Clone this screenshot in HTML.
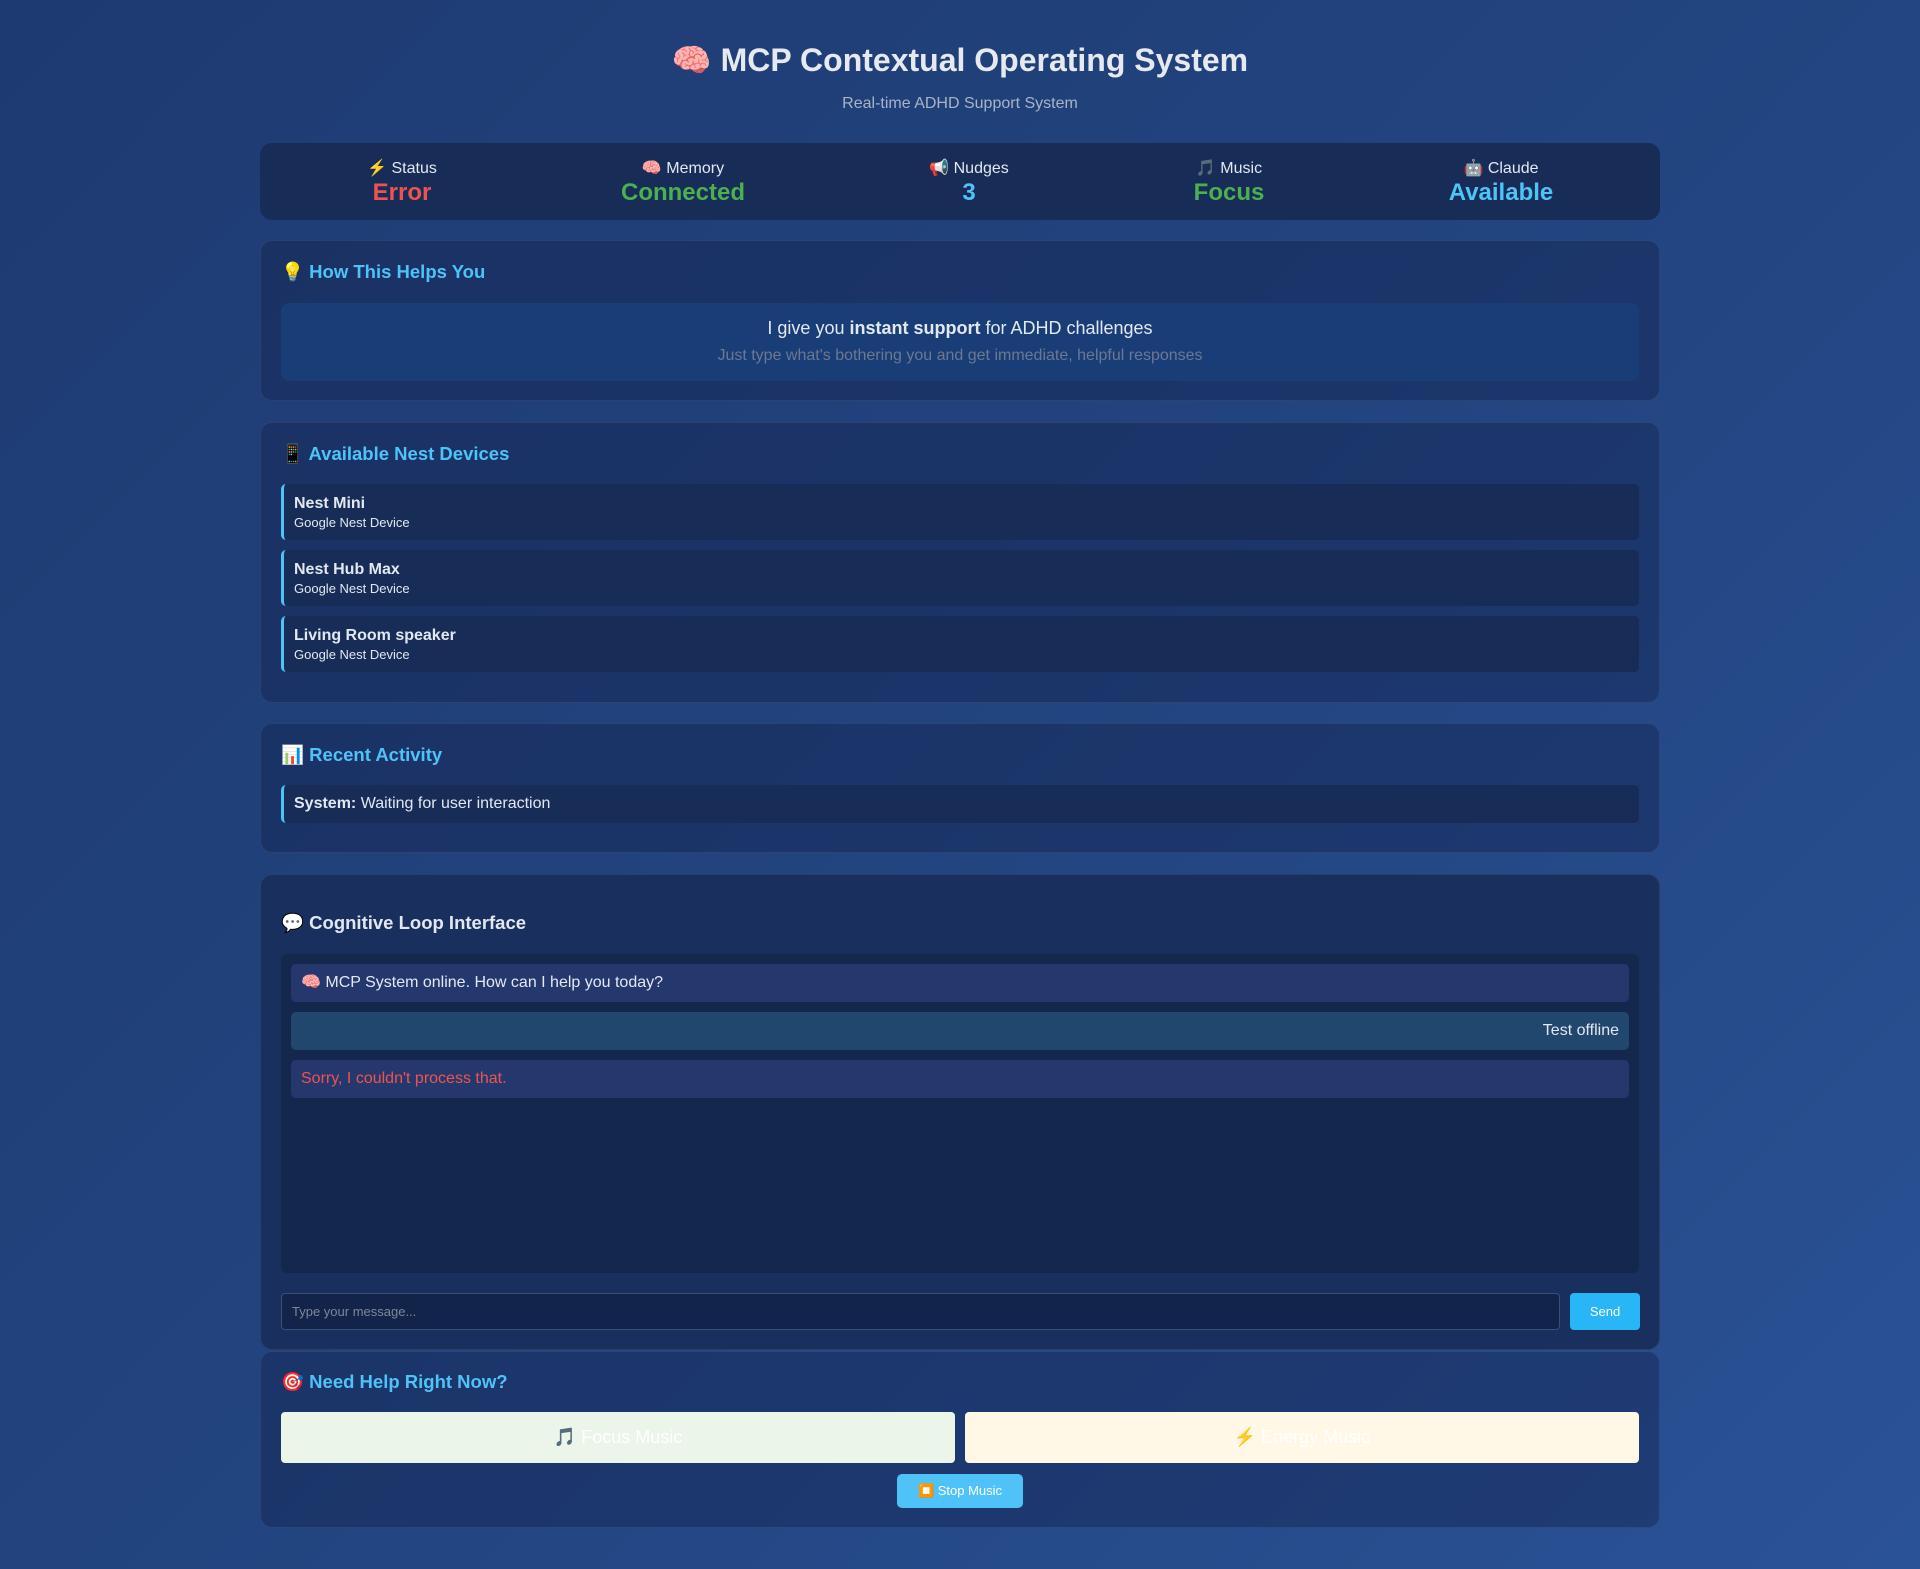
<!DOCTYPE html>
<html><head><meta charset="utf-8"><style>
*{box-sizing:border-box;margin:0;padding:0}
body{width:1920px;height:1569px;overflow:hidden;font-family:"Liberation Sans","Noto Sans CJK SC",sans-serif;color:#e3e8f0;background:linear-gradient(135deg,#1e3a72 0%,#22447f 50%,#2a5296 100%);position:relative}
.a{position:absolute}
.card{position:absolute;left:260px;width:1400px;background:rgba(20,36,80,0.45);border:1px solid rgba(255,255,255,0.08);border-radius:12px}
.h{position:absolute;left:20px;font-size:18.5px;font-weight:bold;color:#4fc3f7}
.st{position:absolute;top:0;text-align:center;transform:translateX(-50%);white-space:nowrap}
.st .l{font-size:16px;color:#e3e8f0;margin-top:15px}
.st .v{font-size:24px;font-weight:bold;margin-top:1px}
.dev{position:absolute;left:20px;width:1358px;height:56px;background:#172c57;border-left:3px solid #4fc3f7;border-radius:5px;padding:11px 0 0 10px}
.dev b{font-size:16px;display:block}
.dev span{font-size:13px;display:block;margin-top:2px}
.msg{position:absolute;left:10px;width:1338px;background:#25386e;border-radius:5px;font-size:16px;padding:0 10px;line-height:38px}
</style></head><body>
<div class="a" style="left:0;width:1920px;top:41px;text-align:center;font-size:32px;font-weight:bold;color:#e6e9ef">🧠 MCP Contextual Operating System</div>
<div class="a" style="left:0;width:1920px;top:95px;text-align:center;font-size:16px;color:#a9b3c6">Real-time ADHD Support System</div>

<div class="card" style="top:143px;height:77px;background:#172c57;border:none">
<div class="st" style="left:142px"><div class="l">⚡ Status</div><div class="v" style="color:#ef5350">Error</div></div>
<div class="st" style="left:423px"><div class="l">🧠 Memory</div><div class="v" style="color:#4caf50">Connected</div></div>
<div class="st" style="left:709px"><div class="l">📢 Nudges</div><div class="v" style="color:#4fc3f7">3</div></div>
<div class="st" style="left:969px"><div class="l">🎵 Music</div><div class="v" style="color:#4caf50">Focus</div></div>
<div class="st" style="left:1241px"><div class="l">🤖 Claude</div><div class="v" style="color:#4fc3f7">Available</div></div>
</div>

<div class="card" style="top:240px;height:161px">
<div class="h" style="top:20px">💡 How This Helps You</div>
<div class="a" style="left:20px;top:62px;width:1358px;height:78px;background:#193d77;border-radius:8px;text-align:center">
<div style="font-size:18px;margin-top:15px">I give you <b>instant support</b> for ADHD challenges</div>
<div style="font-size:16px;color:#6d7890;margin-top:8px">Just type what's bothering you and get immediate, helpful responses</div></div>
</div>

<div class="card" style="top:422px;height:281px">
<div class="h" style="top:20px">📱 Available Nest Devices</div>
<div class="dev" style="top:61px"><b>Nest Mini</b><span>Google Nest Device</span></div>
<div class="dev" style="top:127px"><b>Nest Hub Max</b><span>Google Nest Device</span></div>
<div class="dev" style="top:193px"><b>Living Room speaker</b><span>Google Nest Device</span></div>
</div>

<div class="card" style="top:723px;height:130px">
<div class="h" style="top:20px">📊 Recent Activity</div>
<div class="dev" style="top:61px;height:38px;padding:10px 0 0 10px;font-size:16px"><b style="display:inline;font-size:16px">System:</b> Waiting for user interaction</div>
</div>

<div class="card" style="top:874px;height:476px;background:#192f5d">
<div class="h" style="top:37px;color:#e3e8f0">💬 Cognitive Loop Interface</div>
<div class="a" style="left:20px;top:79px;width:1358px;height:319px;background:#14274d;border-radius:6px">
<div class="msg" style="top:10px">🧠 MCP System online. How can I help you today?</div>
<div class="msg" style="top:58px;background:#21476e;text-align:right">Test offline</div>
<div class="msg" style="top:106px;color:#ef5350">Sorry, I couldn't process that.</div>
</div>
<div class="a" style="left:20px;top:418px;width:1279px;height:37px;background:#13244a;border:1px solid #3a4f78;border-radius:4px;font-size:13px;color:#7d879a;padding:10px 10px">Type your message...</div>
<div class="a" style="left:1309px;top:418px;width:70px;height:37px;background:#29b6f6;border-radius:4px;font-size:13px;color:#fff;text-align:center;line-height:37px">Send</div>
</div>

<div class="card" style="top:1351px;height:177px">
<div class="h" style="top:19px">🎯 Need Help Right Now?</div>
<div class="a" style="left:20px;top:60px;width:674px;height:51px;background:#ebf5e9;border-radius:4px;text-align:center;line-height:51px;font-size:18px;color:#fff">🎵 Focus Music</div>
<div class="a" style="left:704px;top:60px;width:674px;height:51px;background:#fff8e6;border-radius:4px;text-align:center;line-height:51px;font-size:18px;color:#fff">⚡ Energy Music</div>
<div class="a" style="left:636px;top:122px;width:126px;height:34px;background:#4fc3f7;border-radius:5px;text-align:center;line-height:34px;font-size:13px;color:#fff">⏹️ Stop Music</div>
</div>
</body></html>
